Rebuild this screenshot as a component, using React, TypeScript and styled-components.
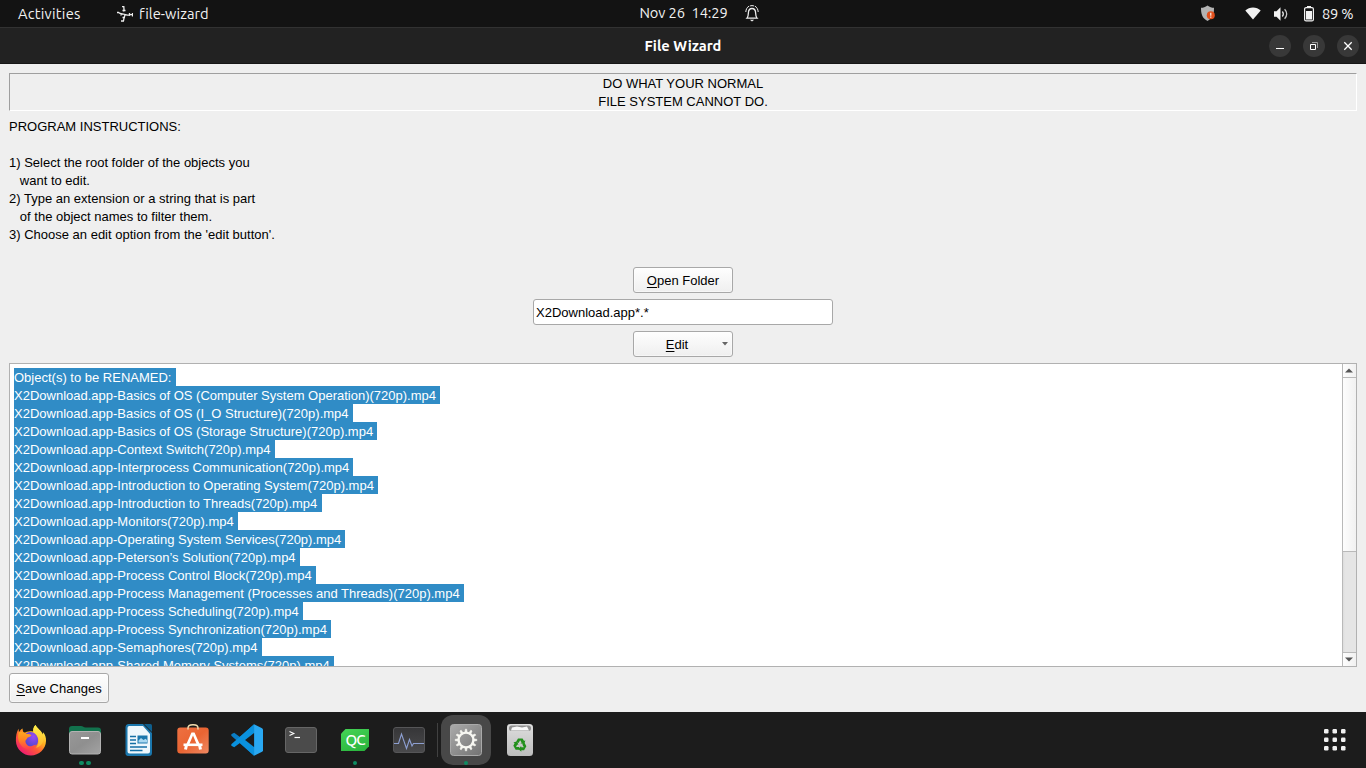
import React from "react";
import styled, { createGlobalStyle } from "styled-components";

const Global = createGlobalStyle`
  * { box-sizing: border-box; }
  body { margin: 0; background: #efefef; overflow: hidden; }
`;

const uiFont = `Ubuntu, "Noto Sans", "Open Sans", sans-serif`;

const Desktop = styled.div`
  width: 1366px;
  height: 768px;
  display: flex;
  flex-direction: column;
  background: #efefef;
  color: #000;
  font: 13px/18px "Liberation Sans", Arial, sans-serif;
`;

const TopBar = styled.header`
  height: 27px;
  flex: none;
  display: grid;
  grid-template-columns: 1fr auto 1fr;
  align-items: center;
  background: #131313;
  color: #f2f2f2;
  font: 14.67px/27px ${uiFont};
  white-space: pre;
`;

const BarGroup = styled.div<{ $end?: boolean }>`
  display: flex;
  align-items: center;
  justify-content: ${(p) => (p.$end ? "flex-end" : "flex-start")};
  height: 27px;
`;

const BarText = styled.span<{ $w: number; $ls?: number; $ml?: number }>`
  width: ${(p) => p.$w}px;
  margin-left: ${(p) => p.$ml ?? 0}px;
  letter-spacing: ${(p) => p.$ls ?? 0}px;
`;

const Clock = styled(BarText)`
  padding-bottom: 2px;
`;

const Glyph = styled.svg<{ $ml?: number }>`
  display: block;
  flex: none;
  margin-left: ${(p) => p.$ml ?? 0}px;
`;

const TitleBar = styled.div`
  height: 37px;
  flex: none;
  display: grid;
  grid-template-columns: 1fr auto 1fr;
  align-items: center;
  background: #222;
  border-top: 1px solid #323232;
  border-bottom: 1px solid #161616;
`;

const WindowTitle = styled.h1`
  grid-column: 2;
  margin: 0;
  color: #fff;
  font: bold 14.67px/35px ${uiFont};
`;

const WindowControls = styled.div`
  display: flex;
  justify-content: flex-end;
  gap: 12px;
  padding-right: 7px;
`;

const RoundButton = styled.button`
  width: 22px;
  height: 22px;
  padding: 0;
  border: 0;
  border-radius: 50%;
  background: #383838;
`;

const Body = styled.main`
  flex: 1;
  min-height: 0;
  display: flex;
  flex-direction: column;
  align-items: center;
  padding: 9px 9px 9px;
`;

const Banner = styled.div`
  width: 100%;
  height: 38px;
  padding-top: 1px;
  border: 1px solid;
  border-color: #9f9f9f #fff #fff #9f9f9f;
  text-align: center;
  white-space: pre;
`;

const Instructions = styled.div`
  width: 100%;
  height: 150px;
  padding-top: 7px;
  white-space: pre;
  margin-bottom: 6px;
`;

const PushButton = styled.button<{ $h: number; $start?: boolean }>`
  position: relative;
  display: flex;
  align-items: center;
  justify-content: center;
  width: 100px;
  height: ${(p) => p.$h}px;
  flex: none;
  align-self: ${(p) => (p.$start ? "flex-start" : "center")};
  padding: 2px 0 0;
  border: 1px solid #a8a8a8;
  border-radius: 3px;
  background: linear-gradient(#fefefe, #efefef);
  color: #000;
  font: inherit;
  box-shadow: inset 0 0 0 1px rgba(255, 255, 255, 0.45);
`;

const Mnemonic = styled.span`
  text-decoration: underline;
  text-underline-offset: 2px;
  text-decoration-thickness: 1px;
  text-decoration-skip-ink: none;
`;

const EditLabel = styled.span`
  margin-right: 12px;
`;

const MenuArrow = styled.svg`
  position: absolute;
  right: 4px;
  top: 10px;
`;

const FilterInput = styled.input`
  width: 300px;
  height: 26px;
  flex: none;
  margin: 6px 0;
  padding: 0 2px;
  border: 1px solid #a8a8a8;
  border-radius: 3px;
  background: #fff;
  color: #000;
  font: inherit;
  outline: none;
`;

const ResultBox = styled.section`
  display: flex;
  width: 100%;
  height: 304px;
  flex: none;
  margin: 6px 0;
  border: 1px solid #b1b1b1;
  background: #fff;
  overflow: hidden;
`;

const Lines = styled.div`
  flex: 1;
  padding: 4px;
  overflow: hidden;
`;

const Line = styled.div<{ $w: number }>`
  width: ${(p) => p.$w}px;
  height: 18px;
  padding-top: 1px;
  background: #308cc6;
  color: #fff;
  white-space: pre;
`;

const ScrollBar = styled.div`
  width: 14px;
  display: flex;
  flex-direction: column;
  border-left: 1px solid #b9b9b9;
  background: linear-gradient(90deg, #dcdcdc, #e5e5e5 2px);
`;

const ScrollArrow = styled.div`
  height: 13px;
  flex: none;
  background: linear-gradient(90deg, #fdfdfd, #f1f1f1);
`;

const ScrollThumb = styled.div`
  height: 175px;
  border: solid #b9b9b9;
  border-width: 1px 0;
  background: linear-gradient(90deg, #fdfdfd, #f1f1f1);
`;

const ScrollTrack = styled.div`
  flex: 1;
  border-bottom: 1px solid #b9b9b9;
`;

const Dock = styled.footer`
  height: 56px;
  flex: none;
  display: flex;
  align-items: center;
  padding-left: 4px;
  background: #1c1c1c;
`;

const DockItem = styled.div<{ $active?: boolean }>`
  position: relative;
  display: flex;
  align-items: center;
  justify-content: center;
  width: ${(p) => (p.$active ? 50 : 54)}px;
  height: ${(p) => (p.$active ? 50 : 56)}px;
  margin: 0 ${(p) => (p.$active ? 2 : 0)}px;
  border-radius: 12px;
  background: ${(p) => (p.$active ? "#484848" : "transparent")};
`;

const Dots = styled.div<{ $bottom: number }>`
  position: absolute;
  left: 0;
  right: 0;
  bottom: ${(p) => p.$bottom}px;
  display: flex;
  justify-content: center;
  gap: 2.5px;
`;

const Dot = styled.i`
  width: 4.5px;
  height: 4.5px;
  border-radius: 50%;
  background: #0f8c62;
`;

const DockDivider = styled.div`
  width: 1px;
  height: 34px;
  margin-left: 1px;
  margin-right: 1px;
  background: #414141;
`;

const AppsButton = styled.div`
  margin-left: auto;
  margin-right: 19px;
`;

const banner = "DO WHAT YOUR NORMAL\nFILE SYSTEM CANNOT DO.";

const instructions = `PROGRAM INSTRUCTIONS:

1) Select the root folder of the objects you
   want to edit.
2) Type an extension or a string that is part
   of the object names to filter them.
3) Choose an edit option from the 'edit button'.`;

const files: [string, number][] = [
  ["Object(s) to be RENAMED:", 162],
  ["X2Download.app-Basics of OS (Computer System Operation)(720p).mp4", 426],
  ["X2Download.app-Basics of OS (I_O Structure)(720p).mp4", 339],
  ["X2Download.app-Basics of OS (Storage Structure)(720p).mp4", 363],
  ["X2Download.app-Context Switch(720p).mp4", 261],
  ["X2Download.app-Interprocess Communication(720p).mp4", 339],
  ["X2Download.app-Introduction to Operating System(720p).mp4", 364],
  ["X2Download.app-Introduction to Threads(720p).mp4", 308],
  ["X2Download.app-Monitors(720p).mp4", 224],
  ["X2Download.app-Operating System Services(720p).mp4", 331],
  ["X2Download.app-Peterson’s Solution(720p).mp4", 286],
  ["X2Download.app-Process Control Block(720p).mp4", 302],
  ["X2Download.app-Process Management (Processes and Threads)(720p).mp4", 450],
  ["X2Download.app-Process Scheduling(720p).mp4", 289],
  ["X2Download.app-Process Synchronization(720p).mp4", 317],
  ["X2Download.app-Semaphores(720p).mp4", 248],
  ["X2Download.app-Shared Memory Systems(720p).mp4", 320],
];

const AppGlyph = () => (
  <Glyph width="16" height="16" viewBox="0 0 16 16" fill="none" stroke="#ededed" $ml={36}>
    <path d="M5 .7h1.800L7 3.500 6.500 5.500M5.500 4.500h3M0 6.500h1.500l1.500 1 4.500.8M3.500 9.200l2-1.200M7.500 8.500l3 .6 4.500-.8M12.500 7v3M15.500 7v3.500M8 9l-1 3-.5 3M5.500 11.500h2.500M4 15h3" strokeWidth="1.300" />
  </Glyph>
);

const BellGlyph = () => (
  <Glyph width="14" height="17" viewBox="0 0 14 17" fill="none" stroke="#eee" $ml={16}>
    <path d="M2 13.200C3.200 12 3.300 10.500 3.400 7.800 3.500 5 4.800 3.500 7 3.500s3.500 1.500 3.600 4.300c.1 2.700.2 4.200 1.400 5.400z" strokeWidth="1.300" />
    <path d="M4.800 1C6 .5 8 .5 9.200 1M.8 7C1 4.300 2 2.300 4 1.200M13.200 7C13 4.300 12 2.300 10 1.200" strokeWidth="1" />
    <path d="M4.800 14.800h4.400L7 16.600z" fill="#eee" stroke="none" />
  </Glyph>
);

const ShieldGlyph = () => (
  <Glyph width="16" height="17" viewBox="0 0 16 17">
    <path d="M7.500.5C5.500 2.200 3 2.800 1 2.800c0 6 1 10.500 6.500 13.200C13 13.300 14 8.800 14 2.800 12 2.800 9.500 2.200 7.500.5z" fill="#b4b4b4" />
    <circle cx="10.800" cy="10.300" r="4" fill="#e2501d" />
    <path d="M10.800 7.800v3M10.800 11.600v1.200" stroke="#fff" strokeWidth="1.100" />
  </Glyph>
);

const WifiGlyph = () => (
  <Glyph width="16" height="13" viewBox="0 0 16 13" $ml={29}>
    <path d="M.3 3.600C4.500-.4 11.500-.4 15.700 3.600L8 12.600z" fill="#f2f2f2" />
  </Glyph>
);

const VolumeGlyph = () => (
  <Glyph width="16" height="14" viewBox="0 0 16 14" $ml={12}>
    <path d="M1 4.300h2.500L7.500.3v13.400L3.500 9.700H1z" fill="#f2f2f2" />
    <path d="M9.300 4.500c1.300 1.500 1.300 3.500 0 5" fill="none" stroke="#ddd" strokeWidth="1.300" />
    <path d="M11.600 2.300c2.800 2.800 2.800 6.600 0 9.400" fill="none" stroke="#c8c8c8" strokeWidth="1.300" />
  </Glyph>
);

const BatteryGlyph = () => (
  <Glyph width="10" height="16" viewBox="0 0 10 16" $ml={15}>
    <path d="M3 0h4v2H3z" fill="#f2f2f2" />
    <rect x=".6" y="1.600" width="8.800" height="13.300" rx="1.500" fill="none" stroke="#f2f2f2" strokeWidth="1.200" />
    <path d="M2 5h6v8.500H2z" fill="#f2f2f2" />
  </Glyph>
);

const Firefox = () => (
  <svg width="32" height="32" viewBox="0 0 32 32">
    <defs>
      <linearGradient id="ffBody" x1=".85" y1=".1" x2=".2" y2=".95">
        <stop offset="0" stopColor="#fff34f" />
        <stop offset=".35" stopColor="#ffae1f" />
        <stop offset=".62" stopColor="#ff5a36" />
        <stop offset="1" stopColor="#ee1776" />
      </linearGradient>
      <linearGradient id="ffTail" x1="0" y1="0" x2="0" y2="1">
        <stop offset="0" stopColor="#fff04a" />
        <stop offset="1" stopColor="#ffb32a" />
      </linearGradient>
      <linearGradient id="ffFace" x1="0" y1="0" x2="0" y2="1">
        <stop offset="0" stopColor="#ffa71f" />
        <stop offset=".45" stopColor="#ff8424" />
        <stop offset="1" stopColor="#ff3f4d" />
      </linearGradient>
      <radialGradient id="ffGlobe" cx=".65" cy=".3" r=".8">
        <stop offset="0" stopColor="#9a4bf2" />
        <stop offset="1" stopColor="#4a45c9" />
      </radialGradient>
    </defs>
    <path d="M20.500 1c-2 2-2.600 4.500-2.400 6.600-3.600-1-7.200.2-9 1.500C8 7.800 7.500 6 7.600 4.500 5.800 5.500 4.700 7 4 8.200L3.500 4.800C1.500 8.500.8 12 .9 17 1.200 25.300 8 31.500 16 31.500S30.800 25 31 17c.2-3.500-.8-6.500-3-8.800l-.2 2.500C26.500 6 22 4.500 20.500 1z" fill="url(#ffBody)" />
    <path d="M10.500 9.500C14 7 19 7.500 21.500 11c2.500 3.500 2 8-.5 10.700-2.500 2.300-6.500 2.500-9 .3-3-3-3-8-1.500-12.500z" fill="url(#ffGlobe)" />
    <path d="M4 8.300c3.500-.8 6 0 7.700 1.600 2 .1 4 .4 4.700 1.100-.2 1.500-3 2-4 2.700-.5 1.300-1.700 2-2 3.300.2 3.600 3 5.700 6 5.200 2-.5 3-1.500 4.700-1.300-1.800 4.600-9.500 6-14 1.600C2.500 17.500 2.500 12 4 8.300z" fill="url(#ffFace)" />
    <path d="M20.500 1c-2 2-2.600 4.500-1.800 7.300 2.500 2 5 5 4.900 8.800 0 3-1 5-2.600 6.700 5-1 8.500-5.800 7.200-11.500C27 7.500 22.500 5.500 20.500 1z" fill="url(#ffTail)" />
  </svg>
);

const Files = () => (
  <svg width="32" height="32" viewBox="0 0 32 32">
    <defs>
      <linearGradient id="folder" x2="1" y2="1">
        <stop stopColor="#989898" />
        <stop offset=".5" stopColor="#8f8f8f" />
        <stop offset="1" stopColor="#a3a3a3" />
      </linearGradient>
    </defs>
    <path d="M0 5a3 3 0 0 1 3-3h9c2 0 2.500 1.500 4.500 1.500H29a3 3 0 0 1 3 3V18H0z" fill="#12724d" />
    <rect x=".5" y="7.500" width="31" height="22.500" rx="2.500" fill="url(#folder)" stroke="#b2b2b2" />
    <path d="M12 14h8" stroke="#fff" strokeWidth="2" />
  </svg>
);

const Writer = () => (
  <svg width="28" height="34" viewBox="0 0 28 34">
    <path d="M3 1h15l9 9v20a3 3 0 0 1-3 3H3a2.500 2.500 0 0 1-2.500-3V4A3 3 0 0 1 3 1z" fill="#1b77ad" />
    <path d="M4 3h14l7 8v17.500a2 2 0 0 1-2 2H4.500a2 2 0 0 1-2-2V5A2 2 0 0 1 4 3z" fill="#eef7fc" />
    <path d="M19 1h6.500A1.500 1.500 0 0 1 27 2.500V9z" fill="#0f5e8c" />
    <path d="M5 13.500h6M5 17h6M5 20.500h6M5 24h17M5 27.500h12.500" stroke="#146fa5" strokeWidth="1.400" />
    <path d="M12.500 12.500h10v8h-10z" fill="#1b77ad" />
    <path d="M13.500 19.500v-2l2.500-2.500 2.500 2 2-1.300 1.500 1.300v2.500z" fill="#a9d8f1" />
  </svg>
);

const Software = () => (
  <svg width="32" height="32" viewBox="0 0 32 32">
    <defs>
      <linearGradient id="bag" x2="1" y2="1">
        <stop stopColor="#ee7142" />
        <stop offset=".5" stopColor="#ea6432" />
        <stop offset="1" stopColor="#f08962" />
      </linearGradient>
    </defs>
    <rect x=".3" y="3.500" width="31.400" height="26" rx="3" fill="url(#bag)" />
    <path d="M11 5.500C10.500 1.500 12.500.8 16 .8s5.500.7 5 4.700" fill="none" stroke="#f5dfb0" strokeWidth="1.400" />
    <path d="M9.200 20.500L14.500 8.500h3l5.300 12h-3L16 11.500l-3.800 9z" fill="#fff" />
    <path d="M6.500 20.800h19" stroke="#fff" strokeWidth="2.600" />
    <path d="M9.500 21l-1 4.500M22.500 21l1 4.500" stroke="#fff" strokeWidth="3" />
  </svg>
);

const Code = () => (
  <svg width="32" height="32" viewBox="0 0 100 100">
    <path d="M72 1L28 41 10 27.500 1 32v5l71 62z" fill="#0b7dc4" />
    <path d="M72 99L28 59 10 72.500 1 68v-5L72 1z" fill="#0a91de" />
    <path d="M72 1l25 12q3 2 3 5v64q0 3-3 5L72 99z" fill="#29a8f2" />
    <path d="M72 28v44L44 50z" fill="#1c1c1c" />
  </svg>
);

const Terminal = () => (
  <svg width="32" height="26" viewBox="0 0 32 26">
    <rect x=".5" y=".5" width="31" height="25" rx="2.500" fill="#4b4b4b" stroke="#666" />
    <path d="M4.500 4.500l4.300 2-4.300 2" fill="none" stroke="#fff" strokeWidth="1.100" />
    <path d="M9.500 10.500h5.500" stroke="#fff" strokeWidth="1.200" />
  </svg>
);

const QtBadge = styled.div`
  width: 28px;
  height: 22px;
  background: linear-gradient(160deg, #45d356, #28b23c);
  clip-path: polygon(16% 0, 100% 0, 100% 78%, 84% 100%, 0 100%, 0 22%);
  color: #fff;
  text-align: center;
  font: 500 15px/22px ${uiFont};
  letter-spacing: -1px;
`;

const Monitor = () => (
  <svg width="32" height="26" viewBox="0 0 32 26">
    <defs>
      <linearGradient id="mon" x2="0" y2="1">
        <stop stopColor="#363638" />
        <stop offset="1" stopColor="#4a4a4c" />
      </linearGradient>
    </defs>
    <rect x=".5" y=".5" width="31" height="25" rx="2.500" fill="url(#mon)" stroke="#565658" />
    <path d="M1 16.500h4.500l3-9.500 5 14.500 3-9 2.500 6.500 1.500-2.500H31" fill="none" stroke="#8d9fd1" strokeWidth="1.100" />
  </svg>
);

const Gear = () => (
  <svg width="32" height="32" viewBox="0 0 32 32">
    <defs>
      <linearGradient id="gear" x2="1" y2="1">
        <stop stopColor="#aaa" />
        <stop offset="1" stopColor="#737373" />
      </linearGradient>
    </defs>
    <rect x=".5" y=".5" width="31" height="31" rx="3" fill="url(#gear)" stroke="#a9a9a9" />
    <circle cx="16" cy="16" r="7.400" fill="none" stroke="#f7f7f2" strokeWidth="2.400" />
    {Array.from({ length: 12 }, (_, i) => (
      <path key={i} d="M15 8.200l.3-3h1.400l.3 3z" fill="#f7f7f2" stroke="#f7f7f2" strokeWidth=".6" transform={`rotate(${i * 30} 16 16)`} />
    ))}
  </svg>
);

const Trash = () => (
  <svg width="26" height="32" viewBox="0 0 26 32">
    <defs>
      <linearGradient id="bin" x2="0" y2="1">
        <stop stopColor="#dedede" />
        <stop offset="1" stopColor="#bdbdbd" />
      </linearGradient>
    </defs>
    <rect width="26" height="32" rx="3.500" fill="url(#bin)" />
    <rect x="2" y="1.500" width="22" height="5.500" rx="2.500" fill="#8f8f8f" />
    <path d="M4 6.500l1-3 5-1 5 1 5-1 2 4z" fill="#fafafa" />
    {[0, 120, 240].map((a) => (
      <g key={a} transform={`rotate(${a} 13 20.800)`} fill="#22901c">
        <path d="M9.200 17.600L11 14.600h4.600l1.500 2.300 1.200-.7-.9 4-4-1 1.200-.7-1.500-2.200-1.500 2.700z" />
      </g>
    ))}
  </svg>
);

const Triangle = ({ up }: { up?: boolean }) => (
  <svg width="13" height="13" viewBox="0 0 13 13" style={{ display: "block" }}>
    <path d={up ? "M2 8.500h8L6 4.500z" : "M2 4.500h8l-4 4z"} fill="#555" />
  </svg>
);

export default function App() {
  return (
    <Desktop>
      <Global />
      <TopBar>
        <BarGroup>
          <BarText $w={63} $ml={18} $ls={0.25}>Activities</BarText>
          <AppGlyph />
          <BarText $w={72} $ml={6} $ls={0.05}>file-wizard</BarText>
        </BarGroup>
        <BarGroup>
          <Clock $w={89} $ml={32} $ls={-0.1}>Nov 26  14:29</Clock>
          <BellGlyph />
        </BarGroup>
        <BarGroup $end>
          <ShieldGlyph />
          <WifiGlyph />
          <VolumeGlyph />
          <BatteryGlyph />
          <BarText $w={44} $ml={8} $ls={-0.2}>89 %</BarText>
        </BarGroup>
      </TopBar>
      <TitleBar>
        <WindowTitle>File Wizard</WindowTitle>
        <WindowControls>
          <RoundButton aria-label="Minimize">
            <Glyph width="22" height="22" viewBox="0 0 22 22">
              <path d="M7 13.500h8" stroke="#fff" />
            </Glyph>
          </RoundButton>
          <RoundButton aria-label="Restore">
            <Glyph width="22" height="22" viewBox="0 0 22 22" fill="none">
              <path d="M9 7.500h5.500V13" stroke="#999" />
              <path d="M7.500 9.500h5v5h-5z" stroke="#fff" />
            </Glyph>
          </RoundButton>
          <RoundButton aria-label="Close">
            <Glyph width="22" height="22" viewBox="0 0 22 22">
              <path d="M7.300 7.300l7.400 7.400M14.700 7.300l-7.400 7.400" stroke="#fff" strokeWidth="1.300" />
            </Glyph>
          </RoundButton>
        </WindowControls>
      </TitleBar>
      <Body>
        <Banner>{banner}</Banner>
        <Instructions>{instructions}</Instructions>
        <PushButton $h={26}>
          <span><Mnemonic>O</Mnemonic>pen Folder</span>
        </PushButton>
        <FilterInput defaultValue="X2Download.app*.*" />
        <PushButton $h={26}>
          <EditLabel><Mnemonic>E</Mnemonic>dit</EditLabel>
          <MenuArrow width="6" height="4" viewBox="0 0 6 4">
            <path d="M0 0h6L3 3.500z" fill="#666" />
          </MenuArrow>
        </PushButton>
        <ResultBox>
          <Lines>
            {files.map(([name, w]) => (
              <Line key={name} $w={w}>{name}</Line>
            ))}
          </Lines>
          <ScrollBar>
            <ScrollArrow><Triangle up /></ScrollArrow>
            <ScrollThumb />
            <ScrollTrack />
            <ScrollArrow><Triangle /></ScrollArrow>
          </ScrollBar>
        </ResultBox>
        <PushButton $h={30} $start>
          <span><Mnemonic>S</Mnemonic>ave Changes</span>
        </PushButton>
      </Body>
      <Dock>
        <DockItem><Firefox /></DockItem>
        <DockItem>
          <Files />
          <Dots $bottom={3}><Dot /><Dot /></Dots>
        </DockItem>
        <DockItem><Writer /></DockItem>
        <DockItem><Software /></DockItem>
        <DockItem><Code /></DockItem>
        <DockItem><Terminal /></DockItem>
        <DockItem>
          <QtBadge>QC</QtBadge>
          <Dots $bottom={3}><Dot /></Dots>
        </DockItem>
        <DockItem><Monitor /></DockItem>
        <DockDivider />
        <DockItem $active>
          <Gear />
          <Dots $bottom={0}><Dot /></Dots>
        </DockItem>
        <DockItem><Trash /></DockItem>
        <AppsButton>
          <svg width="24" height="24" viewBox="0 0 24 24" fill="#f2f2f2" style={{ display: "block" }}>
            {[1, 9.500, 18].map((y) =>
              [1, 9.500, 18].map((x) => <rect key={`${x}-${y}`} x={x} y={y} width="4.500" height="4.500" rx="1.200" />)
            )}
          </svg>
        </AppsButton>
      </Dock>
    </Desktop>
  );
}
